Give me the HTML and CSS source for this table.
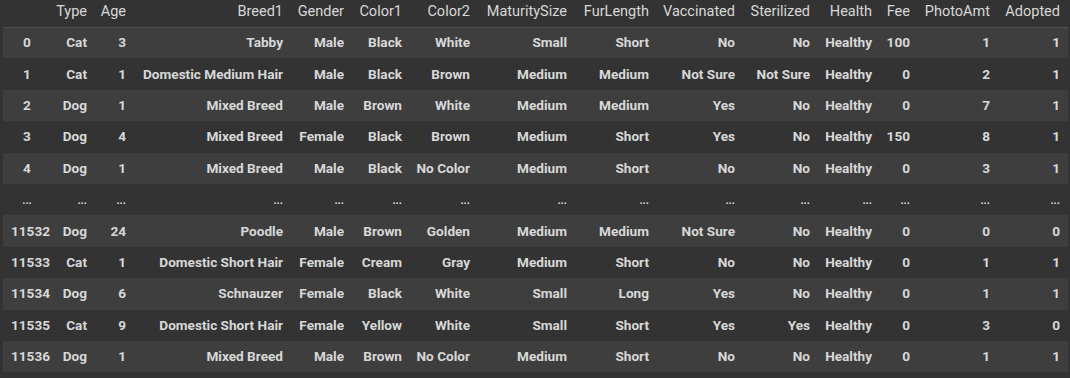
FILE: index.html
```html
<!DOCTYPE html>
<html>
<head>
<meta charset="utf-8">
<link rel="stylesheet" href="styles.css">
</head>
<body>
<div class="wrap">
<table class="df">
<colgroup>
<col class="w-idx"><col class="w-type"><col class="w-age"><col class="w-breed"><col class="w-gender"><col class="w-c1"><col class="w-c2"><col class="w-mat"><col class="w-fur"><col class="w-vac"><col class="w-ster"><col class="w-health"><col class="w-fee"><col class="w-photo"><col class="w-adopt">
</colgroup>
<thead>
<tr><th></th><th>Type</th><th>Age</th><th>Breed1</th><th>Gender</th><th>Color1</th><th>Color2</th><th>MaturitySize</th><th>FurLength</th><th>Vaccinated</th><th>Sterilized</th><th>Health</th><th>Fee</th><th>PhotoAmt</th><th>Adopted</th></tr>
</thead>
<tbody>
<tr><th>0</th><td>Cat</td><td>3</td><td>Tabby</td><td>Male</td><td>Black</td><td>White</td><td>Small</td><td>Short</td><td>No</td><td>No</td><td>Healthy</td><td>100</td><td>1</td><td>1</td></tr>
<tr><th>1</th><td>Cat</td><td>1</td><td>Domestic Medium Hair</td><td>Male</td><td>Black</td><td>Brown</td><td>Medium</td><td>Medium</td><td>Not Sure</td><td>Not Sure</td><td>Healthy</td><td>0</td><td>2</td><td>1</td></tr>
<tr><th>2</th><td>Dog</td><td>1</td><td>Mixed Breed</td><td>Male</td><td>Brown</td><td>White</td><td>Medium</td><td>Medium</td><td>Yes</td><td>No</td><td>Healthy</td><td>0</td><td>7</td><td>1</td></tr>
<tr><th>3</th><td>Dog</td><td>4</td><td>Mixed Breed</td><td>Female</td><td>Black</td><td>Brown</td><td>Medium</td><td>Short</td><td>Yes</td><td>No</td><td>Healthy</td><td>150</td><td>8</td><td>1</td></tr>
<tr><th>4</th><td>Dog</td><td>1</td><td>Mixed Breed</td><td>Male</td><td>Black</td><td>No Color</td><td>Medium</td><td>Short</td><td>No</td><td>No</td><td>Healthy</td><td>0</td><td>3</td><td>1</td></tr>
<tr class="dots"><th>...</th><td>...</td><td>...</td><td>...</td><td>...</td><td>...</td><td>...</td><td>...</td><td>...</td><td>...</td><td>...</td><td>...</td><td>...</td><td>...</td><td>...</td></tr>
<tr><th>11532</th><td>Dog</td><td>24</td><td>Poodle</td><td>Male</td><td>Brown</td><td>Golden</td><td>Medium</td><td>Medium</td><td>Not Sure</td><td>No</td><td>Healthy</td><td>0</td><td>0</td><td>0</td></tr>
<tr><th>11533</th><td>Cat</td><td>1</td><td>Domestic Short Hair</td><td>Female</td><td>Cream</td><td>Gray</td><td>Medium</td><td>Short</td><td>No</td><td>No</td><td>Healthy</td><td>0</td><td>1</td><td>1</td></tr>
<tr><th>11534</th><td>Dog</td><td>6</td><td>Schnauzer</td><td>Female</td><td>Black</td><td>White</td><td>Small</td><td>Long</td><td>Yes</td><td>No</td><td>Healthy</td><td>0</td><td>1</td><td>1</td></tr>
<tr><th>11535</th><td>Cat</td><td>9</td><td>Domestic Short Hair</td><td>Female</td><td>Yellow</td><td>White</td><td>Small</td><td>Short</td><td>Yes</td><td>Yes</td><td>Healthy</td><td>0</td><td>3</td><td>0</td></tr>
<tr><th>11536</th><td>Dog</td><td>1</td><td>Mixed Breed</td><td>Male</td><td>Brown</td><td>No Color</td><td>Medium</td><td>Short</td><td>No</td><td>No</td><td>Healthy</td><td>0</td><td>1</td><td>1</td></tr>
</tbody>
</table>
</div>
</body>
</html>
```
FILE: styles.css
```css
html, body {
  margin: 0;
  padding: 0;
  background: #333333;
}
.wrap {
  padding: 0 2px 0 3px;
}
.df {
  table-layout: fixed;
  width: 1065px;
  border-collapse: collapse;
  border-spacing: 0;
  font-family: Roboto, "Liberation Sans", sans-serif;
  color: #d8d8d8;
}
.df th, .df td {
  padding: 0 8px 0 0;
  text-align: right;
  white-space: nowrap;
  overflow: hidden;
}
.df thead th {
  font-size: 14.5px;
  font-weight: 400;
  height: 27px;
  border-bottom: 1px solid #4f4f4f;
  vertical-align: middle;
  padding-bottom: 4px;
  box-sizing: border-box;
}
.df tbody tr {
  height: 31.4px;
  font-size: 13.6px;
}
.df tbody td {
  font-weight: 700;
  padding-bottom: 1px;
}
.df tbody th {
  font-weight: 700;
  text-align: center;
  padding: 0 8px 1px 8px;
}
.df tbody tr:nth-child(odd) {
  background: #3e3e3e;
}
.df tbody tr:nth-child(even) {
  background: #333333;
}
.df tbody tr.dots td, .df tbody tr.dots th {
  font-size: 11px;
  padding-top: 3px;
}
.w-idx { width: 48px; }
.w-type { width: 44px; }
.w-age { width: 39px; }
.w-breed { width: 157px; }
.w-gender { width: 61px; }
.w-c1 { width: 58px; }
.w-c2 { width: 68px; }
.w-mat { width: 97px; }
.w-fur { width: 82px; }
.w-vac { width: 86px; }
.w-ster { width: 75px; }
.w-health { width: 62px; }
.w-fee { width: 38px; }
.w-photo { width: 80px; }
.w-adopt { width: 70px; }
```
